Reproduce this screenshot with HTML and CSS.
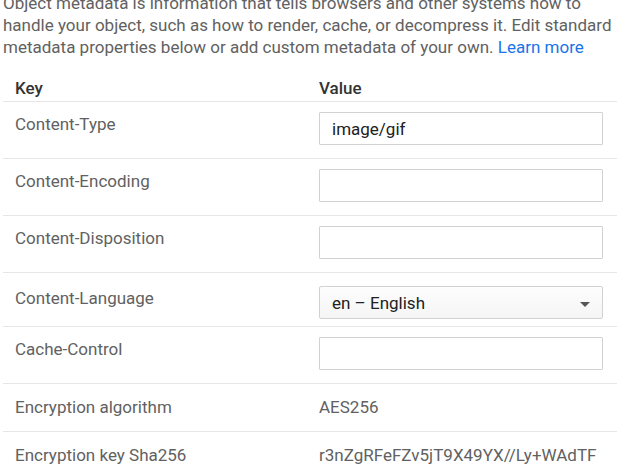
FILE: index.html
```html
<!DOCTYPE html>
<html>

<head>
    <title>Edit metadata</title>
    <link rel="stylesheet" href="styles.css">
</head>

<body>
    <p class="intro">
        Object metadata is information that tells browsers and other systems how to<br>
        handle your object, such as how to render, cache, or decompress it. Edit standard<br>
        metadata properties below or add custom metadata of your own. <a href="#">Learn more</a>
    </p>
    <div class="meta-table">
        <div class="meta-row head">
            <div class="key">Key</div>
            <div class="value">Value</div>
        </div>
        <div class="meta-row">
            <div class="key">Content-Type</div>
            <div class="value"><input type="text" value="image/gif"></div>
        </div>
        <div class="meta-row">
            <div class="key">Content-Encoding</div>
            <div class="value"><input type="text"></div>
        </div>
        <div class="meta-row">
            <div class="key">Content-Disposition</div>
            <div class="value"><input type="text"></div>
        </div>
        <div class="meta-row lang">
            <div class="key">Content-Language</div>
            <div class="value">
                <div class="select">
                    <span>en &ndash; English</span>
                    <span class="arrow"></span>
                </div>
            </div>
        </div>
        <div class="meta-row">
            <div class="key">Cache-Control</div>
            <div class="value"><input type="text"></div>
        </div>
        <div class="meta-row plain">
            <div class="key">Encryption algorithm</div>
            <div class="value">AES256</div>
        </div>
        <div class="meta-row plain">
            <div class="key">Encryption key Sha256</div>
            <div class="value">r3nZgRFeFZv5jT9X49YX//Ly+WAdTF</div>
        </div>
    </div>
</body>

</html>
```

FILE: styles.css
```css
body {
    margin: 0;
    padding: 0 3px;
    background-color: #fff;
    font-family: Roboto, "Noto Sans", sans-serif;
    font-size: 17px;
    color: #616161;
    overflow: hidden;
}

.intro {
    margin: -8px 0 0 0;
    line-height: 22px;
    white-space: nowrap;
}

.intro a {
    color: #1a73e8;
    text-decoration: none;
}

.meta-table {
    margin-top: 18px;
    width: 614px;
}

.meta-row {
    display: grid;
    grid-template-columns: 316px 1fr;
    padding: 10px 0 13px;
    border-bottom: 1px solid #e6e6e6;
    line-height: 24px;
}

.meta-row .key {
    padding-left: 12px;
}

.meta-row.head {
    padding: 0 0 1px;
    font-weight: 500;
    color: #333;
}

.meta-row.lang {
    padding: 13px 0 7px;
}

.meta-row.plain {
    padding: 11px 0 12px;
}

.meta-row input {
    box-sizing: border-box;
    width: 284px;
    height: 33px;
    padding: 0 12px;
    border: 1px solid #d2d2d2;
    border-radius: 1px;
    font-family: Roboto, "Noto Sans", sans-serif;
    font-size: 17px;
    color: #212121;
    outline: none;
}

.select {
    box-sizing: border-box;
    display: flex;
    align-items: center;
    justify-content: space-between;
    width: 284px;
    height: 33px;
    padding: 0 12px;
    border: 1px solid #d2d2d2;
    border-radius: 2px;
    background: linear-gradient(#fdfdfd, #f5f5f5);
    color: #212121;
}

.select .arrow {
    width: 0;
    height: 0;
    border-left: 5px solid transparent;
    border-right: 5px solid transparent;
    border-top: 5px solid #555;
    margin-top: 3px;
}
```
